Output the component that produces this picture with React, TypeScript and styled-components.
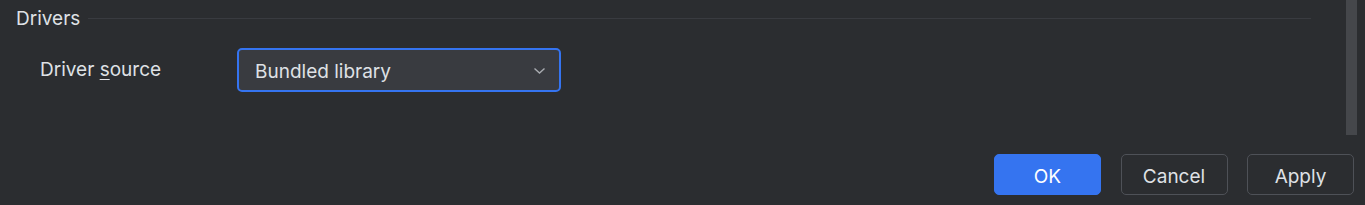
import React from "react";
import styled, { createGlobalStyle } from "styled-components";

const colors = {
  bg: "#2b2d30",
  text: "#dfe1e5",
  separator: "#393b40",
  field: "#393b40",
  accent: "#3574f0",
  buttonBorder: "#4e5157",
  scrollThumb: "#45474b",
  chevron: "#a8abb0",
};

const GlobalStyle = createGlobalStyle`
  html, body {
    margin: 0;
    padding: 0;
    background: ${colors.bg};
  }
  body {
    font-family: Inter, "Noto Sans", "Liberation Sans", sans-serif;
    color: ${colors.text};
  }
`;

const Page = styled.div`
  display: flex;
  flex-direction: column;
  width: 1365px;
  height: 205px;
  background: ${colors.bg};
  overflow: hidden;
`;

const ScrollPane = styled.div`
  display: flex;
  flex-direction: row;
  height: 138px;
`;

const Content = styled.div`
  flex: 1;
  display: flex;
  flex-direction: column;
  padding: 8px 35px 0 16px;
`;

const ScrollThumb = styled.div`
  width: 11px;
  height: 135px;
  margin-right: 8px;
  background: ${colors.scrollThumb};
`;

const SectionHeader = styled.div`
  display: flex;
  align-items: center;
  gap: 8px;
  height: 22px;
`;

const SectionTitle = styled.span`
  font-size: 19px;
  line-height: 22px;
`;

const SectionLine = styled.div`
  flex: 1;
  height: 1px;
  margin-top: -2px;
  background: ${colors.separator};
`;

const FormRow = styled.div`
  display: flex;
  align-items: center;
  margin-top: 18px;
  padding-left: 24px;
`;

const Label = styled.label`
  width: 197px;
  font-size: 19px;
  line-height: 22px;
  margin-top: 0;

  u {
    text-underline-offset: 3px;
  }
`;

const Combo = styled.div`
  box-sizing: border-box;
  display: flex;
  align-items: center;
  justify-content: space-between;
  width: 324px;
  height: 44px;
  padding: 2px 13px 0 16px;
  border: 2px solid ${colors.accent};
  border-radius: 5px;
  background: ${colors.field};
  font-size: 19px;
`;

const Footer = styled.div`
  display: flex;
  justify-content: flex-end;
  gap: 19.5px;
  padding: 16px 11px 0 0;
`;

const Button = styled.button<{ primary?: boolean }>`
  box-sizing: border-box;
  width: 107px;
  height: 41px;
  padding: 3px 0 0;
  border-radius: 5px;
  font-family: inherit;
  font-size: 19px;
  color: ${(p) => (p.primary ? "#ffffff" : colors.text)};
  background: ${(p) => (p.primary ? colors.accent : "transparent")};
  border: 1px solid ${(p) => (p.primary ? colors.accent : colors.buttonBorder)};
  cursor: pointer;
`;

const Chevron = () => (
  <svg width="13" height="8" viewBox="0 0 13 8">
    <path
      d="M1.5 1.5 L6.5 6 L11.5 1.5"
      fill="none"
      stroke={colors.chevron}
      strokeWidth="1.4"
    />
  </svg>
);

const App = () => (
  <>
    <GlobalStyle />
    <Page>
      <ScrollPane>
        <Content>
          <SectionHeader>
            <SectionTitle>Drivers</SectionTitle>
            <SectionLine />
          </SectionHeader>
          <FormRow>
            <Label>
              Driver <u>s</u>ource
            </Label>
            <Combo>
              <span>Bundled library</span>
              <Chevron />
            </Combo>
          </FormRow>
        </Content>
        <ScrollThumb />
      </ScrollPane>
      <Footer>
        <Button primary>OK</Button>
        <Button>Cancel</Button>
        <Button>Apply</Button>
      </Footer>
    </Page>
  </>
);

export default App;
